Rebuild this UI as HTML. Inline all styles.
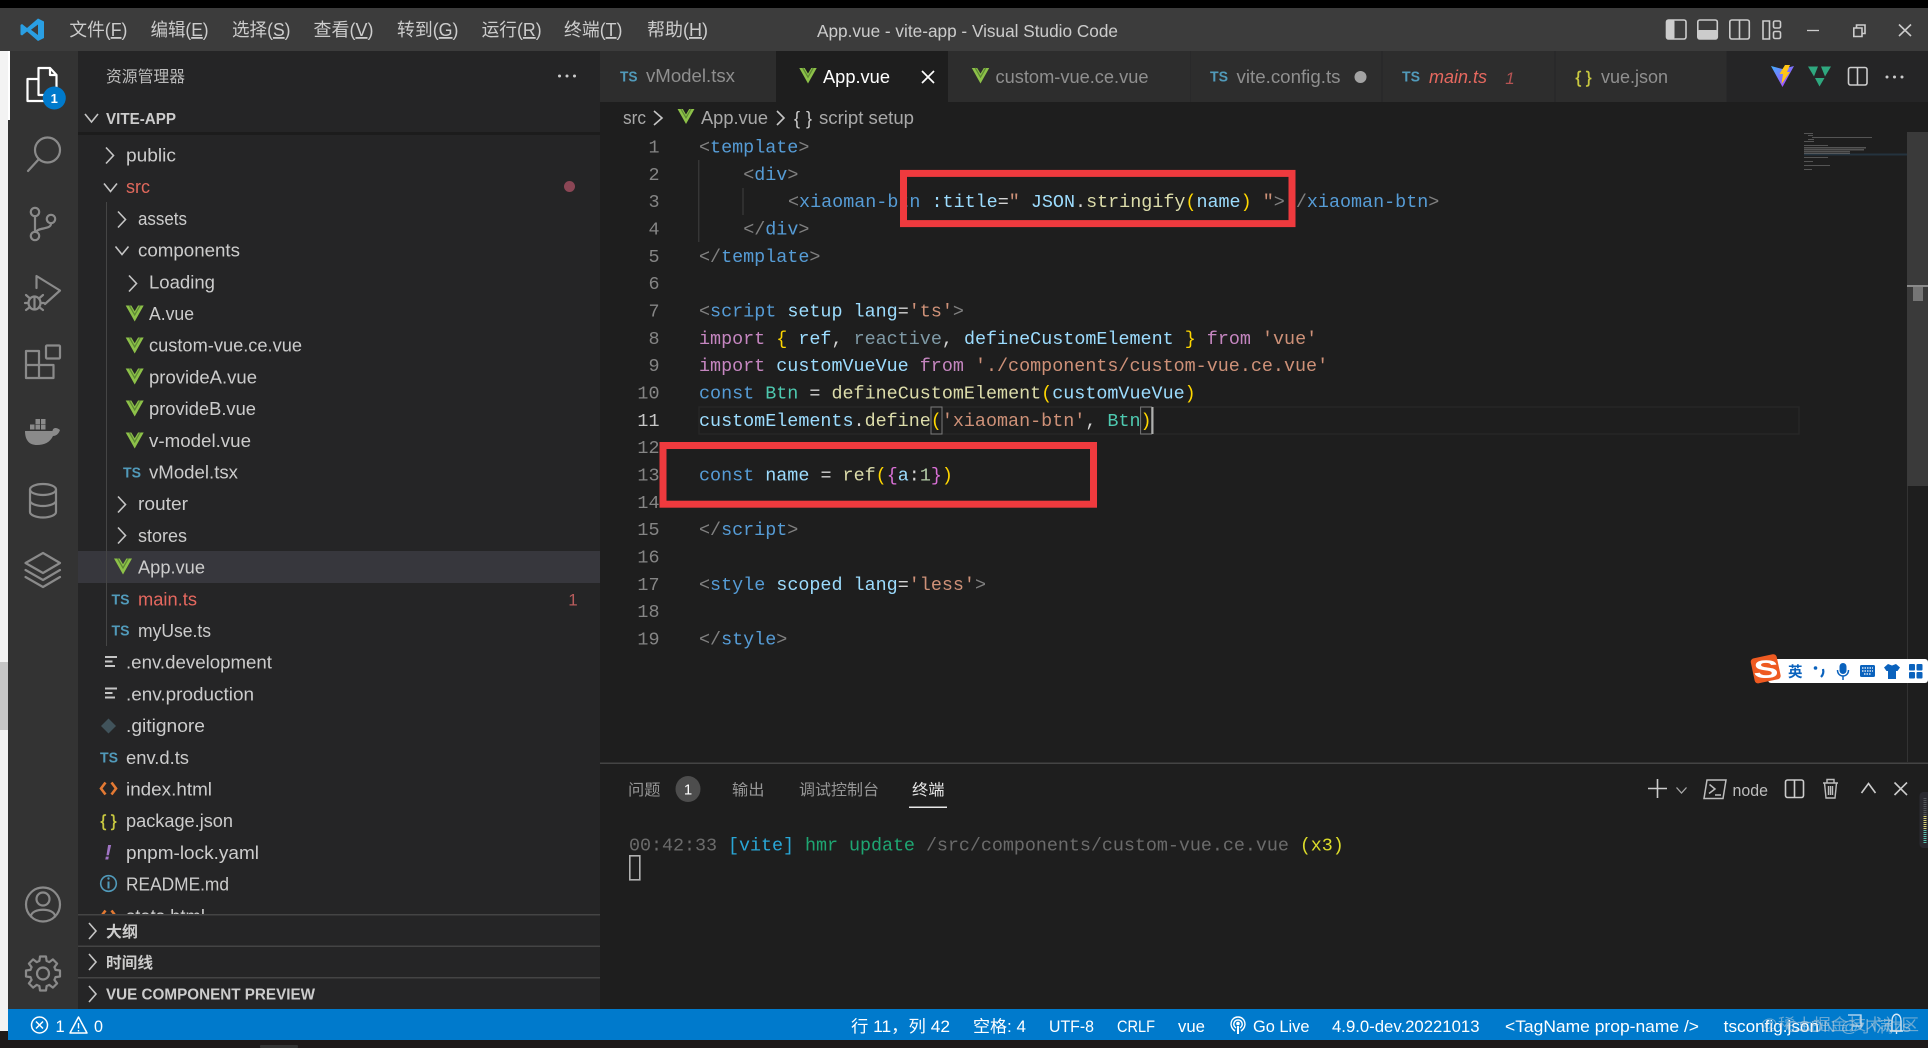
<!DOCTYPE html>
<html lang="zh-CN">
<head>
<meta charset="utf-8">
<title>App.vue - vite-app - Visual Studio Code</title>
<style>
html,body{margin:0;padding:0;width:1928px;height:1048px;overflow:hidden;background:#1e1e1e}
svg{display:block}
text{font-family:"Liberation Sans","Noto Sans CJK SC",sans-serif;white-space:pre}
.m{font-size:18px;fill:#cccccc}
.t{font-size:18px;fill:#cccccc}
.c{font-family:"Liberation Mono","Noto Sans CJK SC",monospace;font-size:18.4px;fill:#d4d4d4}
.n{font-family:"Liberation Mono",monospace;font-size:18.4px;fill:#858585;text-anchor:end}
.ts{font-size:15px;font-weight:700;fill:#519aba}
.h{font-size:15.5px;font-weight:700;fill:#cccccc}
.tab{font-size:18px;fill:#8f8f8f}
.s{font-size:16.5px;fill:#ffffff}
.p{font-size:15.5px;fill:#969696}
.g{fill:#808080}.b{fill:#569cd6}.a{fill:#9cdcfe}.v{fill:#ce9178}.k{fill:#c586c0}.f{fill:#dcdcaa}.y{fill:#4ec9b0}.o{fill:#ffd700}.q{fill:#da70d6}.w{fill:#d4d4d4}
.ic{fill:none;stroke:#8a8a8a;stroke-width:2.2;stroke-linecap:round;stroke-linejoin:round}
.ch{fill:none;stroke:#c5c5c5;stroke-width:1.6}
.wi{fill:none;stroke:#cccccc;stroke-width:1.6}
.mm{fill:#8a8a8a;opacity:.5}
</style>
</head>
<body>
<svg width="1928" height="1048" viewBox="0 0 1928 1048" xmlns="http://www.w3.org/2000/svg">
<defs>
<symbol id="vue" viewBox="0 0 18 16" overflow="visible">
<path d="M0 0H5.600L9 5.800L12.400 0H18L9 16Z" fill="#8dc149"/>
<path d="M3.600 0L9 9.400L14.400 0" fill="none" stroke="#5e8a34" stroke-width="1.300"/>
</symbol>
<linearGradient id="vg" x1="0" y1="0" x2="1" y2="1"><stop offset="0" stop-color="#41b0ff"/><stop offset="1" stop-color="#bd34fe"/></linearGradient>
<path id="gt" d="M12 -5L12.500 -3.600L17 -3V3L12.500 3.600L12 5" fill="none" stroke="#8a8a8a" stroke-width="2.200" stroke-linejoin="round"/>
</defs>

<!-- base -->
<rect width="1928" height="1048" fill="#1e1e1e"/>
<rect x="0" y="0" width="1928" height="8" fill="#000"/>
<rect x="0" y="8" width="1928" height="43" fill="#3c3c3c"/>
<rect x="0" y="51" width="8" height="980" fill="#f3f3f3"/>
<rect x="0" y="662" width="8" height="68" fill="#c6c6c6"/>
<rect x="8" y="51" width="70" height="958" fill="#333333"/>
<rect x="78" y="51" width="522" height="958" fill="#252526"/>
<rect x="8" y="51" width="2" height="69" fill="#ffffff"/>

<!-- title bar -->
<path d="M38 18.500L44 21.500V38L38 41L27 31.500L22 35.500L20.500 34.500V25L22 24L27 28ZM38 24.500L31 29.800L38 35Z" fill="#2a9fe3"/>
<text class="m" x="69.400" y="36" textLength="58" lengthAdjust="spacingAndGlyphs">文件(<tspan text-decoration="underline">F</tspan>)</text>
<text class="m" x="150.600" y="36" textLength="58" lengthAdjust="spacingAndGlyphs">编辑(<tspan text-decoration="underline">E</tspan>)</text>
<text class="m" x="232" y="36" textLength="58.500" lengthAdjust="spacingAndGlyphs">选择(<tspan text-decoration="underline">S</tspan>)</text>
<text class="m" x="313.500" y="36" textLength="60" lengthAdjust="spacingAndGlyphs">查看(<tspan text-decoration="underline">V</tspan>)</text>
<text class="m" x="397" y="36" textLength="61.500" lengthAdjust="spacingAndGlyphs">转到(<tspan text-decoration="underline">G</tspan>)</text>
<text class="m" x="481.600" y="36" textLength="60" lengthAdjust="spacingAndGlyphs">运行(<tspan text-decoration="underline">R</tspan>)</text>
<text class="m" x="564" y="36" textLength="58.500" lengthAdjust="spacingAndGlyphs">终端(<tspan text-decoration="underline">T</tspan>)</text>
<text class="m" x="647" y="36" textLength="61" lengthAdjust="spacingAndGlyphs">帮助(<tspan text-decoration="underline">H</tspan>)</text>
<text class="m" x="817" y="37" textLength="301" lengthAdjust="spacingAndGlyphs" style="font-size:17.500px">App.vue - vite-app - Visual Studio Code</text>

<!-- layout icons -->
<rect x="1666.500" y="20" width="19.500" height="19" rx="2" class="wi"/><rect x="1666.500" y="20" width="8" height="19" rx="1.500" fill="#cccccc"/>
<rect x="1697.800" y="20" width="19.500" height="19" rx="2" class="wi"/><rect x="1697.800" y="30" width="19.500" height="9" rx="1.500" fill="#cccccc"/>
<rect x="1729.800" y="20" width="19.500" height="19" rx="2" class="wi"/><path d="M1739.500 20V39" class="wi"/>
<path d="M1769.500 21H1763V39H1769.500Z" class="wi"/><rect x="1773.500" y="21" width="7" height="7" rx="1.500" class="wi"/><rect x="1773.500" y="31.500" width="7" height="7" rx="1.500" class="wi"/>
<path d="M1807 30.500H1819" stroke="#cccccc" stroke-width="1.300"/>
<path d="M1853.800 28H1862V36.500H1853.800Z" class="wi" stroke-width="1.300"/><path d="M1856.500 28V25H1865V33.500H1862" class="wi" stroke-width="1.300"/>
<path d="M1899 24.500L1911 36M1911 24.500L1899 36" class="wi"/>

<!-- activity bar -->
<g>
<path d="M38.500 68H50L56.500 75V95H38.500Z M50 68V75H56.500" fill="none" stroke="#ffffff" stroke-width="2.200" stroke-linejoin="round"/>
<path d="M38.500 79H27.500V101H46V95" fill="none" stroke="#ffffff" stroke-width="2.200" stroke-linejoin="round"/>
<circle cx="54.300" cy="98" r="11.500" fill="#007acc"/>
<text x="54.300" y="103" text-anchor="middle" style="font-size:13px;font-weight:700;fill:#fff">1</text>
</g>
<circle cx="47.500" cy="150" r="12.500" class="ic"/><path d="M38.500 159.500L28 171" class="ic"/>
<circle cx="35" cy="212" r="4.200" class="ic"/><circle cx="35" cy="236" r="4.200" class="ic"/><circle cx="51" cy="219" r="4.200" class="ic"/>
<path d="M35 216.500V231.500M51 223.500C51 230 38 227 36 232" class="ic"/>
<path d="M36.500 288V276L60 290.500L45 304" class="ic"/>
<ellipse cx="34.500" cy="303" rx="6" ry="6.500" class="ic"/><path d="M26 295L30 298.500M43 295L39 298.500M25 303H28M41 303H44M26 310L30 307M43 310L39 307M34.500 297V309" class="ic" stroke-width="1.700"/>
<path d="M26 351H39V365H53.500V378H26ZM26 365H39V378" class="ic"/><rect x="46" y="345.500" width="14" height="13" rx="1" class="ic"/>
<g fill="#8a8a8a">
<path d="M25 431H52.500C53 427.500 56.500 427 60 430C58.500 434.500 55.500 436 53 436C50 442.500 44 445 37 445C29 445 25 440 25 431Z"/>
<rect x="30" y="424.500" width="4.500" height="5"/><rect x="35.500" y="424.500" width="4.500" height="5"/><rect x="41" y="424.500" width="4.500" height="5"/><rect x="35.500" y="419" width="4.500" height="5"/><rect x="41" y="419" width="4.500" height="5"/>
</g>
<ellipse cx="43" cy="489.500" rx="13" ry="5.500" class="ic"/><path d="M30 489.500V512C30 515 36 517.500 43 517.500S56 515 56 512V489.500M30 500.500C30 503.500 36 506 43 506S56 503.500 56 500.500" class="ic"/>
<path d="M43 553L60 563L43 573L25.500 563ZM25.500 570L43 580L60 570M25.500 577L43 587L60 577" class="ic"/>
<circle cx="43" cy="904.500" r="17" class="ic"/><circle cx="43" cy="899" r="6.500" class="ic"/><path d="M31 916.500C31 907.500 55 907.500 55 916.500" class="ic"/>
<g transform="translate(43 973.500)">
<circle r="6" class="ic"/>
<use href="#gt"/><use href="#gt" transform="rotate(45)"/><use href="#gt" transform="rotate(90)"/><use href="#gt" transform="rotate(135)"/><use href="#gt" transform="rotate(180)"/><use href="#gt" transform="rotate(225)"/><use href="#gt" transform="rotate(270)"/><use href="#gt" transform="rotate(315)"/>
</g>

<!-- sidebar header -->
<text x="106" y="82" textLength="79" lengthAdjust="spacingAndGlyphs" style="font-size:15.800px;fill:#bbbbbb">资源管理器</text>
<g fill="#cccccc"><circle cx="559.500" cy="76" r="1.500"/><circle cx="567" cy="76" r="1.500"/><circle cx="574.500" cy="76" r="1.500"/></g>
<path d="M85 114L91.500 122L98 114" class="ch"/>
<text class="h" x="106" y="124" textLength="70" lengthAdjust="spacingAndGlyphs">VITE-APP</text>
<rect x="78" y="132" width="522" height="3" fill="#1c1c1c"/>

<!-- tree -->
<rect x="78" y="551" width="522" height="32" fill="#37373d"/>
<path d="M106.500 202V646" stroke="#454545" stroke-width="1"/>
<g transform="translate(0 .5)">
<path d="M106 147L113.500 155L106 163" class="ch"/>
<text class="t" x="126" y="161" textLength="50" lengthAdjust="spacingAndGlyphs">public</text>
<path d="M104 183L110.500 191L117 183" class="ch"/>
<text class="t" x="126" y="192.700" textLength="24" lengthAdjust="spacingAndGlyphs" style="fill:#e0685c">src</text>
<circle cx="569.500" cy="186" r="5.500" fill="#8b4655"/>
<path d="M118 211L125.500 219L118 227" class="ch"/>
<text class="t" x="138" y="224.400" textLength="49" lengthAdjust="spacingAndGlyphs">assets</text>
<path d="M115.500 246L122 254L128.500 246" class="ch"/>
<text class="t" x="138" y="256.100" textLength="102" lengthAdjust="spacingAndGlyphs">components</text>
<path d="M129 275L136.500 283L129 291" class="ch"/>
<text class="t" x="149" y="287.800" textLength="66" lengthAdjust="spacingAndGlyphs">Loading</text>
<use href="#vue" x="125.700" y="305" width="18" height="16"/>
<text class="t" x="149" y="319.500" textLength="45" lengthAdjust="spacingAndGlyphs">A.vue</text>
<use href="#vue" x="125.700" y="337" width="18" height="16"/>
<text class="t" x="149" y="351.200" textLength="153" lengthAdjust="spacingAndGlyphs">custom-vue.ce.vue</text>
<use href="#vue" x="125.700" y="368" width="18" height="16"/>
<text class="t" x="149" y="382.900" textLength="108" lengthAdjust="spacingAndGlyphs">provideA.vue</text>
<use href="#vue" x="125.700" y="400" width="18" height="16"/>
<text class="t" x="149" y="414.600" textLength="107" lengthAdjust="spacingAndGlyphs">provideB.vue</text>
<use href="#vue" x="125.700" y="432" width="18" height="16"/>
<text class="t" x="149" y="446.300" textLength="102" lengthAdjust="spacingAndGlyphs">v-model.vue</text>
<text class="ts" x="123" y="477" textLength="18" lengthAdjust="spacingAndGlyphs">TS</text>
<text class="t" x="149" y="478" textLength="89" lengthAdjust="spacingAndGlyphs">vModel.tsx</text>
<path d="M118 496L125.500 504L118 512" class="ch"/>
<text class="t" x="138" y="509.700" textLength="50" lengthAdjust="spacingAndGlyphs">router</text>
<path d="M118 527L125.500 535L118 543" class="ch"/>
<text class="t" x="138" y="541.400" textLength="49" lengthAdjust="spacingAndGlyphs">stores</text>
<use href="#vue" x="114" y="558" width="18" height="16"/>
<text class="t" x="138" y="573.100" textLength="67" lengthAdjust="spacingAndGlyphs">App.vue</text>
<text class="ts" x="111.500" y="604" textLength="18" lengthAdjust="spacingAndGlyphs">TS</text>
<text class="t" x="138" y="604.800" textLength="59" lengthAdjust="spacingAndGlyphs" style="fill:#e5685f">main.ts</text>
<text x="573" y="605" text-anchor="middle" style="font-size:17px;fill:#b85c5c">1</text>
<text class="ts" x="111.500" y="635" textLength="18" lengthAdjust="spacingAndGlyphs">TS</text>
<text class="t" x="138" y="636.500" textLength="73" lengthAdjust="spacingAndGlyphs">myUse.ts</text>
<path d="M105 656.500H117M105 661H112.500M105 665.500H115" stroke="#c5c5c5" stroke-width="2"/>
<text class="t" x="126" y="668.200" textLength="146" lengthAdjust="spacingAndGlyphs">.env.development</text>
<path d="M105 688H117M105 692.500H112.500M105 697H115" stroke="#c5c5c5" stroke-width="2"/>
<text class="t" x="126" y="699.900" textLength="128" lengthAdjust="spacingAndGlyphs">.env.production</text>
<path d="M108.500 718L116 725.500L108.500 733L101 725.500Z" fill="#41535b"/>
<text class="t" x="126" y="731.600" textLength="79" lengthAdjust="spacingAndGlyphs">.gitignore</text>
<text class="ts" x="100" y="762" textLength="18" lengthAdjust="spacingAndGlyphs">TS</text>
<text class="t" x="126" y="763.300" textLength="63" lengthAdjust="spacingAndGlyphs">env.d.ts</text>
<path d="M105.500 782L101 788L105.500 794M111.500 782L116 788L111.500 794" fill="none" stroke="#e37933" stroke-width="2.600"/>
<text class="t" x="126" y="795" textLength="86" lengthAdjust="spacingAndGlyphs">index.html</text>
<text x="100.500" y="826" textLength="16" style="font-size:17px;fill:#cbcb41;stroke:#cbcb41;stroke-width:.4">{}</text>
<text class="t" x="126" y="826.700" textLength="107" lengthAdjust="spacingAndGlyphs">package.json</text>
<text x="108" y="859" text-anchor="middle" style="font-size:21px;font-weight:700;font-style:italic;fill:#a074c4">!</text>
<text class="t" x="126" y="858.400" textLength="133" lengthAdjust="spacingAndGlyphs">pnpm-lock.yaml</text>
<circle cx="108.500" cy="883" r="7.800" fill="none" stroke="#519aba" stroke-width="1.600"/><path d="M108.500 881V888" stroke="#519aba" stroke-width="2"/><circle cx="108.500" cy="878" r="1.200" fill="#519aba"/>
<text class="t" x="126" y="890.100" textLength="103" lengthAdjust="spacingAndGlyphs">README.md</text>
<path d="M105.500 910L101 916L105.500 922M111.500 910L116 916L111.500 922" fill="none" stroke="#e37933" stroke-width="2.600"/>
<text class="t" x="126" y="921.800" textLength="79" lengthAdjust="spacingAndGlyphs">stats.html</text>
</g>

<!-- collapsed sections -->
<rect x="78" y="914" width="522" height="95" fill="#252526"/>
<rect x="78" y="914" width="522" height="1.500" fill="#444444"/>
<rect x="78" y="945.500" width="522" height="1.500" fill="#444444"/>
<rect x="78" y="977" width="522" height="1.500" fill="#444444"/>
<path d="M89 923L96 931L89 939" class="ch"/>
<text class="h" x="106" y="937" textLength="32" lengthAdjust="spacingAndGlyphs">大纲</text>
<path d="M89 954L96 962L89 970" class="ch"/>
<text class="h" x="106" y="968" textLength="47" lengthAdjust="spacingAndGlyphs">时间线</text>
<path d="M89 986L96 994L89 1002" class="ch"/>
<text class="h" x="106" y="999.500" textLength="209" lengthAdjust="spacingAndGlyphs">VUE COMPONENT PREVIEW</text>

<!-- tabs -->
<rect x="600" y="51" width="1328" height="51" fill="#252526"/>
<rect x="600" y="51" width="176" height="51" fill="#2d2d2d"/>
<rect x="776" y="51" width="172" height="51" fill="#1e1e1e"/>
<rect x="948" y="51" width="242" height="51" fill="#2d2d2d"/>
<rect x="1190.500" y="51" width="191" height="51" fill="#2d2d2d"/>
<rect x="1382.500" y="51" width="172" height="51" fill="#2d2d2d"/>
<rect x="1555.500" y="51" width="171" height="51" fill="#2d2d2d"/>
<text class="ts" x="620" y="81.500" textLength="17.500" lengthAdjust="spacingAndGlyphs">TS</text>
<text class="tab" x="646" y="82" textLength="89" lengthAdjust="spacingAndGlyphs">vModel.tsx</text>
<use href="#vue" x="799" y="68" width="18" height="15.500"/>
<text class="tab" x="823" y="83" textLength="67" lengthAdjust="spacingAndGlyphs" style="fill:#ffffff">App.vue</text>
<path d="M922 71L934 83M934 71L922 83" stroke="#ffffff" stroke-width="1.700" fill="none"/>
<use href="#vue" x="971.500" y="68" width="18" height="15.500"/>
<text class="tab" x="995.500" y="83" textLength="153" lengthAdjust="spacingAndGlyphs">custom-vue.ce.vue</text>
<text class="ts" x="1210" y="81.500" textLength="18" lengthAdjust="spacingAndGlyphs">TS</text>
<text class="tab" x="1236.500" y="83" textLength="104" lengthAdjust="spacingAndGlyphs">vite.config.ts</text>
<circle cx="1360.500" cy="77" r="6" fill="#a3a3a3"/>
<text class="ts" x="1402" y="81.500" textLength="18" lengthAdjust="spacingAndGlyphs">TS</text>
<text class="tab" x="1429" y="83" textLength="58" lengthAdjust="spacingAndGlyphs" style="fill:#e5685f;font-style:italic">main.ts</text>
<text x="1510" y="84" text-anchor="middle" style="font-size:17px;font-style:italic;fill:#b55353">1</text>
<text x="1575.500" y="83" textLength="16" style="font-size:17px;fill:#cbcb41;stroke:#cbcb41;stroke-width:.4">{}</text>
<text class="tab" x="1601" y="83" textLength="67" lengthAdjust="spacingAndGlyphs">vue.json</text>

<!-- editor actions -->
<path d="M1771 66L1782.500 69L1794 66L1782.500 87Z" fill="url(#vg)"/>
<path d="M1785 65L1790 65L1787 72L1790 72L1781.500 84L1783 74L1779.500 74Z" fill="#ffc517"/>
<path d="M1808 66.500H1818L1814 76.500Z M1821 66.500H1831L1825 76.500Z M1815 78H1824.500L1819.500 86.500Z" fill="#2fa87f"/>
<rect x="1848.500" y="67.500" width="18.500" height="17.500" rx="2" class="wi"/><path d="M1857.500 67.500V85" class="wi"/>
<g fill="#cccccc"><circle cx="1887" cy="77" r="1.500"/><circle cx="1894.500" cy="77" r="1.500"/><circle cx="1902" cy="77" r="1.500"/></g>

<!-- breadcrumbs -->
<text class="tab" x="623" y="124" textLength="23" lengthAdjust="spacingAndGlyphs" style="fill:#a9a9a9">src</text>
<path d="M654 111L662 118L654 125" class="ch" stroke="#a9a9a9"/>
<use href="#vue" x="677" y="109" width="18" height="15"/>
<text class="tab" x="701" y="124" textLength="67" lengthAdjust="spacingAndGlyphs" style="fill:#a9a9a9">App.vue</text>
<path d="M777 111L784 118L777 125" class="ch" stroke="#a9a9a9"/>
<text x="794" y="124.500" textLength="18" style="font-size:18px;fill:#cccccc">{}</text>
<text class="tab" x="819" y="124" textLength="95" lengthAdjust="spacingAndGlyphs" style="fill:#a9a9a9">script setup</text>

<!-- code -->
<rect x="699" y="407" width="1100" height="27" fill="none" stroke="#272727" stroke-width="1.500"/>
<path d="M698.800 160V242M743 188V215" stroke="#404040" stroke-width="1"/>
<rect x="931" y="407" width="11" height="27" fill="none" stroke="#7a7a7a" stroke-width="1"/>
<rect x="1140.600" y="407" width="11" height="27" fill="none" stroke="#7a7a7a" stroke-width="1"/>
<rect x="1151.500" y="407" width="2" height="27" fill="#aeafad"/>

<g transform="translate(0 -.5)">
<text class="n" x="659.500" y="153">1</text>
<text class="n" x="659.500" y="180.300">2</text>
<text class="n" x="659.500" y="207.700">3</text>
<text class="n" x="659.500" y="235">4</text>
<text class="n" x="659.500" y="262.300">5</text>
<text class="n" x="659.500" y="289.700">6</text>
<text class="n" x="659.500" y="317">7</text>
<text class="n" x="659.500" y="344.300">8</text>
<text class="n" x="659.500" y="371.700">9</text>
<text class="n" x="659.500" y="399">10</text>
<text class="n" x="659.500" y="426.300" style="fill:#c6c6c6">11</text>
<text class="n" x="659.500" y="453.700">12</text>
<text class="n" x="659.500" y="481">13</text>
<text class="n" x="659.500" y="508.300">14</text>
<text class="n" x="659.500" y="535.700">15</text>
<text class="n" x="659.500" y="563">16</text>
<text class="n" x="659.500" y="590.300">17</text>
<text class="n" x="659.500" y="617.700">18</text>
<text class="n" x="659.500" y="645">19</text>

<text class="c" x="699" y="153"><tspan class="g">&lt;</tspan><tspan class="b">template</tspan><tspan class="g">&gt;</tspan></text>
<text class="c" x="743.200" y="180.300"><tspan class="g">&lt;</tspan><tspan class="b">div</tspan><tspan class="g">&gt;</tspan></text>
<text class="c" x="788" y="207.700"><tspan class="g">&lt;</tspan><tspan class="b">xiaoman-btn</tspan> <tspan class="a">:title</tspan><tspan class="w">=</tspan><tspan class="v">"</tspan> <tspan class="a">JSON</tspan><tspan class="w">.</tspan><tspan class="f">stringify</tspan><tspan class="o">(</tspan><tspan class="a">name</tspan><tspan class="o">)</tspan> <tspan class="v">"</tspan><tspan class="g">&gt;</tspan><tspan fill-opacity="0">&lt;</tspan><tspan class="g">/</tspan><tspan class="b">xiaoman-btn</tspan><tspan class="g">&gt;</tspan></text>
<text class="c" x="743.200" y="235"><tspan class="g">&lt;/</tspan><tspan class="b">div</tspan><tspan class="g">&gt;</tspan></text>
<text class="c" x="699" y="262.300"><tspan class="g">&lt;/</tspan><tspan class="b">template</tspan><tspan class="g">&gt;</tspan></text>
<text class="c" x="699" y="317"><tspan class="g">&lt;</tspan><tspan class="b">script</tspan> <tspan class="a">setup</tspan> <tspan class="a">lang</tspan><tspan class="w">=</tspan><tspan class="v">'ts'</tspan><tspan class="g">&gt;</tspan></text>
<text class="c" x="699" y="344.300"><tspan class="k">import</tspan> <tspan class="o">{</tspan> <tspan class="a">ref</tspan><tspan class="w">,</tspan> <tspan style="fill:#7f9aa6">reactive</tspan><tspan class="w">,</tspan> <tspan class="a">defineCustomElement</tspan> <tspan class="o">}</tspan> <tspan class="k">from</tspan> <tspan class="v">'vue'</tspan></text>
<text class="c" x="699" y="371.700"><tspan class="k">import</tspan> <tspan class="a">customVueVue</tspan> <tspan class="k">from</tspan> <tspan class="v">'./components/custom-vue.ce.vue'</tspan></text>
<text class="c" x="699" y="399"><tspan class="b">const</tspan> <tspan class="y">Btn</tspan> <tspan class="w">=</tspan> <tspan class="f">defineCustomElement</tspan><tspan class="o">(</tspan><tspan class="a">customVueVue</tspan><tspan class="o">)</tspan></text>
<text class="c" x="699" y="426.300"><tspan class="a">customElements</tspan><tspan class="w">.</tspan><tspan class="f">define</tspan><tspan class="o">(</tspan><tspan class="v">'xiaoman-btn'</tspan><tspan class="w">,</tspan> <tspan class="y">Btn</tspan><tspan class="o">)</tspan></text>
<text class="c" x="699" y="481"><tspan class="b">const</tspan> <tspan class="a">name</tspan> <tspan class="w">=</tspan> <tspan class="f">ref</tspan><tspan class="o">(</tspan><tspan class="q">{</tspan><tspan class="a">a</tspan><tspan class="w">:</tspan><tspan style="fill:#b5cea8">1</tspan><tspan class="q">}</tspan><tspan class="o">)</tspan></text>
<text class="c" x="699" y="535.700"><tspan class="g">&lt;/</tspan><tspan class="b">script</tspan><tspan class="g">&gt;</tspan></text>
<text class="c" x="699" y="590.300"><tspan class="g">&lt;</tspan><tspan class="b">style</tspan> <tspan class="a">scoped</tspan> <tspan class="a">lang</tspan><tspan class="w">=</tspan><tspan class="v">'less'</tspan><tspan class="g">&gt;</tspan></text>
<text class="c" x="699" y="645"><tspan class="g">&lt;/</tspan><tspan class="b">style</tspan><tspan class="g">&gt;</tspan></text>
</g>

<!-- red annotation boxes -->
<rect x="903.500" y="173.400" width="388.500" height="50.200" fill="none" stroke="#ef3a3e" stroke-width="7"/>
<rect x="663" y="445.500" width="430.500" height="58.700" fill="none" stroke="#ef3a3e" stroke-width="7"/>

<!-- minimap + scrollbar -->
<rect x="1907" y="132" width="21" height="354" fill="#3a3a3a"/>
<rect x="1907" y="486" width="1" height="276" fill="#333333"/>
<rect x="1907" y="285" width="21" height="2" fill="#8a8a8a"/>
<rect x="1913" y="287" width="10" height="14" fill="#757575"/>
<rect x="1804" y="153.500" width="103" height="2" fill="#24333e"/>
<g class="mm">
<rect x="1804" y="133" width="9" height="1"/>
<rect x="1808" y="135" width="5" height="1"/>
<rect x="1812" y="137" width="60" height="1"/>
<rect x="1808" y="139" width="6" height="1"/>
<rect x="1804" y="141" width="10" height="1"/>
<rect x="1804" y="145" width="24" height="1"/>
<rect x="1804" y="147" width="62" height="1.500"/>
<rect x="1804" y="149" width="60" height="1.500"/>
<rect x="1804" y="151" width="46" height="1.500"/>
<rect x="1804" y="153" width="46" height="1"/>
<rect x="1804" y="157" width="24" height="1"/>
<rect x="1804" y="161" width="9" height="1"/>
<rect x="1804" y="165" width="26" height="1"/>
<rect x="1804" y="169" width="8" height="1"/>
</g>

<!-- sogou IME -->
<rect x="1768" y="659" width="160" height="24" rx="3" fill="#ffffff"/>
<rect x="1752.500" y="656" width="26.500" height="25.500" rx="3.500" fill="#ee5a21" transform="rotate(-12 1766 669)"/>
<text x="1753.500" y="678" textLength="25" lengthAdjust="spacingAndGlyphs" style="font-size:25px;font-weight:700;fill:#ffffff">S</text>
<text x="1788" y="677" textLength="14" style="font-size:14.500px;font-weight:700;fill:#0a62bd">英</text>
<circle cx="1815.500" cy="668" r="1.800" fill="#0a62bd"/>
<path d="M1823 669C1824 673 1822.500 675.500 1821 677" stroke="#0a62bd" stroke-width="2.200" fill="none"/>
<rect x="1839.500" y="663" width="7" height="11" rx="3.500" fill="#0a62bd"/>
<path d="M1837.500 670C1837.500 678 1848.500 678 1848.500 670M1843 676V680" stroke="#0a62bd" stroke-width="1.500" fill="none"/>
<rect x="1860" y="665" width="15" height="12" rx="1.500" fill="#0a62bd"/>
<path d="M1862 668H1873M1862 671H1873M1864 674H1871" stroke="#ffffff" stroke-width="1.200" stroke-dasharray="1.500 1"/>
<path d="M1888 664L1892 665.500L1896 664L1900 667.500L1897.500 671H1896V679H1888V671H1886.500L1884 667.500Z" fill="#0a62bd"/>
<path d="M1910 665h4v4.500h-4zM1917.500 665h4v4.500h-4zM1910 673h4v4.500h-4zM1917.500 673h4v4.500h-4z" fill="#0a62bd" stroke="#0a62bd" stroke-width="2" stroke-linejoin="round"/>

<!-- panel -->
<rect x="600" y="762.500" width="1328" height="1.500" fill="#444444"/>
<text class="p" x="628" y="795" textLength="32.500" lengthAdjust="spacingAndGlyphs">问题</text>
<ellipse cx="688" cy="789" rx="12.500" ry="13" fill="#4d4d4d"/>
<text x="688" y="794.500" text-anchor="middle" style="font-size:15px;fill:#ffffff">1</text>
<text class="p" x="732" y="795" textLength="32.500" lengthAdjust="spacingAndGlyphs">输出</text>
<text class="p" x="799" y="795" textLength="80" lengthAdjust="spacingAndGlyphs">调试控制台</text>
<text class="p" x="912" y="795" textLength="32.500" lengthAdjust="spacingAndGlyphs" style="fill:#e7e7e7">终端</text>
<rect x="909" y="806.500" width="38" height="1.500" fill="#e7e7e7"/>

<path d="M1657.500 779V798M1648 788.500H1667" stroke="#cccccc" stroke-width="1.600"/>
<path d="M1676.500 787.500L1681.500 793L1686.500 787.500" fill="none" stroke="#a9a9a9" stroke-width="1.300"/>
<path d="M1707 780H1726L1723 798.500H1704Z" fill="none" stroke="#bdbdbd" stroke-width="1.500"/>
<path d="M1709.500 784.500L1715 789L1709 793.500M1715 795H1721" fill="none" stroke="#bdbdbd" stroke-width="1.500"/>
<text x="1732.500" y="796" textLength="35.500" lengthAdjust="spacingAndGlyphs" style="font-size:16.500px;fill:#bdbdbd">node</text>
<rect x="1785.500" y="780" width="18" height="17.500" rx="2" class="wi"/><path d="M1794.500 780V797.500" class="wi"/>
<path d="M1823 783H1838M1827 783V779.500H1834V783M1824.500 783L1826 798H1835L1836.500 783M1828.500 786V795M1830.500 786V795M1832.500 786V795" fill="none" stroke="#bdbdbd" stroke-width="1.400"/>
<path d="M1861.500 793L1868.500 783.500L1875.500 793" fill="none" stroke="#cccccc" stroke-width="1.600"/>
<path d="M1894.500 782.500L1907 795M1907 782.500L1894.500 795" fill="none" stroke="#cccccc" stroke-width="1.600"/>
<rect x="1919.500" y="792" width="12" height="56" rx="4" fill="#2a2a30"/>
<path d="M1925 798V815" stroke="#55585c" stroke-width="3" stroke-dasharray="1 1"/>
<path d="M1925 816V830" stroke="#d8d27a" stroke-width="3" stroke-dasharray="1 1"/>
<path d="M1925 830V843" stroke="#5ec4b0" stroke-width="3" stroke-dasharray="1 1"/>

<text class="c" x="629" y="850.500" style="letter-spacing:-.04px"><tspan style="fill:#6b6b6b">00:42:33</tspan> <tspan style="fill:#29a6d6">[vite]</tspan> <tspan style="fill:#1ea672">hmr update</tspan> <tspan style="fill:#6b6b6b">/src/components/custom-vue.ce.vue</tspan> <tspan style="fill:#dcdc2a">(x3)</tspan></text>
<rect x="629.800" y="855.800" width="10" height="24" fill="none" stroke="#b0b0b0" stroke-width="1.600"/>

<!-- status bar -->
<rect x="8" y="1009" width="1920" height="31" fill="#007acc"/>
<rect x="0" y="1040" width="1928" height="8" fill="#1e1a1a"/>
<rect x="0" y="1031" width="8" height="9" fill="#1e1a1a"/>
<rect x="260" y="1045" width="38" height="3" rx="1" fill="#333333"/>
<circle cx="39.500" cy="1025" r="8" fill="none" stroke="#fff" stroke-width="1.500"/><path d="M36 1021.500L43 1028.500M43 1021.500L36 1028.500" stroke="#fff" stroke-width="1.500"/>
<text class="s" x="55.500" y="1032">1</text>
<path d="M78.500 1017L87 1033H70Z" fill="none" stroke="#fff" stroke-width="1.500" stroke-linejoin="round"/><path d="M78.500 1023V1028.500M78.500 1030V1031.500" stroke="#fff" stroke-width="1.400"/>
<text class="s" x="94" y="1032" textLength="9" lengthAdjust="spacingAndGlyphs">0</text>
<text class="s" x="851" y="1032" textLength="99" lengthAdjust="spacingAndGlyphs">行 11，列 42</text>
<text class="s" x="973" y="1032" textLength="53" lengthAdjust="spacingAndGlyphs">空格: 4</text>
<text class="s" x="1049" y="1032" textLength="45" lengthAdjust="spacingAndGlyphs">UTF-8</text>
<text class="s" x="1117" y="1032" textLength="38" lengthAdjust="spacingAndGlyphs">CRLF</text>
<text class="s" x="1178" y="1032" textLength="27" lengthAdjust="spacingAndGlyphs">vue</text>
<path d="M1238 1034V1026" stroke="#fff" stroke-width="2"/><circle cx="1238" cy="1023.500" r="1.800" fill="#fff"/><path d="M1235 1031C1228 1026 1231 1017 1238 1017C1245 1017 1248 1026 1241 1031M1236 1028C1232 1025 1234 1020 1238 1020C1242 1020 1244 1025 1240 1028" fill="none" stroke="#fff" stroke-width="1.400"/>
<text class="s" x="1253" y="1032" textLength="56.500" lengthAdjust="spacingAndGlyphs">Go Live</text>
<text class="s" x="1332" y="1032" textLength="147.500" lengthAdjust="spacingAndGlyphs">4.9.0-dev.20221013</text>
<text class="s" x="1505" y="1032" textLength="194" lengthAdjust="spacingAndGlyphs">&lt;TagName prop-name /&gt;</text>
<text class="s" x="1723.700" y="1032" textLength="95.300" lengthAdjust="spacingAndGlyphs">tsconfig.json</text>
<path d="M1848 1015H1861V1026H1853" fill="none" stroke="#fff" stroke-width="1.300" opacity=".8"/>
<path d="M1889.500 1031H1903M1892 1031V1021C1892 1012 1901 1012 1901 1021V1031M1896.500 1031V1034" fill="none" stroke="#fff" stroke-width="1.400" opacity=".85"/>
<text x="1760" y="1030" textLength="159" lengthAdjust="spacingAndGlyphs" style="font-size:16px;fill:#d8d8d8;opacity:.5">@稀土掘金技术社区</text>
<text x="1786" y="1032" textLength="125" lengthAdjust="spacingAndGlyphs" style="font-size:15.500px;fill:#cfd8df;opacity:.55">CSDN @小满zs</text>
</svg>
</body>
</html>
